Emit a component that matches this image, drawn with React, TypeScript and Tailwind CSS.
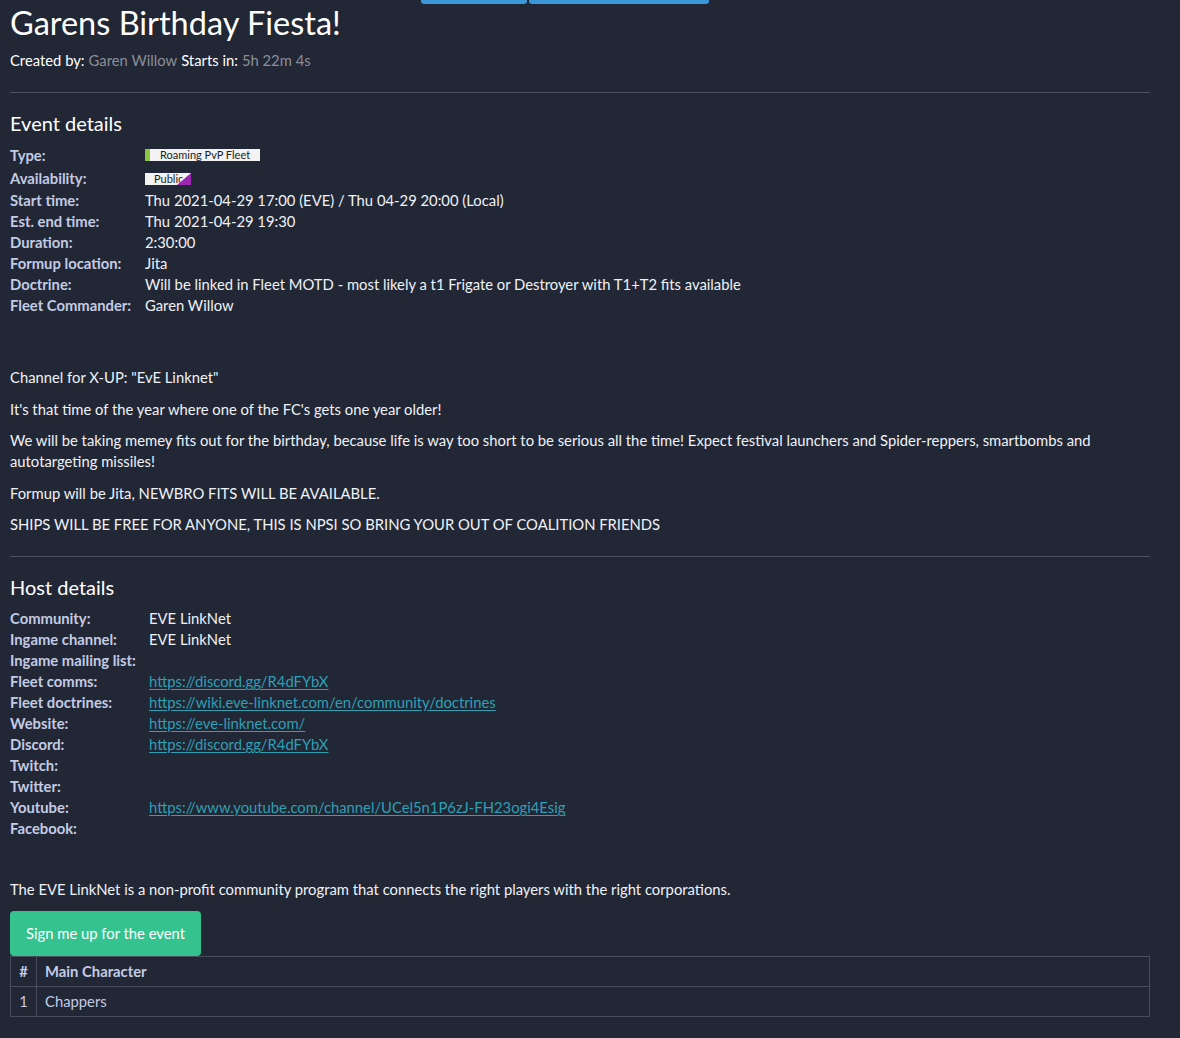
import React from "react";

const font = { fontFamily: "Lato, 'Noto Sans', sans-serif" };

function Row({ label, children, labelW }: { label: string; children?: React.ReactNode; labelW: string }) {
  return (
    <div className="flex h-[21px] items-center">
      <div className={`${labelW} shrink-0 font-bold text-[#c3cbe4]`}>{label}</div>
      <div className="text-[#eff2f7]">{children}</div>
    </div>
  );
}

function Link({ children }: { children: React.ReactNode }) {
  return <a className="text-[#2f9fb3] underline underline-offset-2" href="#">{children}</a>;
}

export default function App() {
  return (
    <div className="relative min-h-[1038px] bg-[#222736] text-[14.8px] leading-[21px] text-[#eff2f7]" style={font}>
      <div className="absolute left-[421px] top-0 flex h-[4px] gap-[2px]">
        <div className="h-[4px] w-[106px] rounded-b-[3px] bg-[#3b97d8]" />
        <div className="h-[4px] w-[180px] rounded-b-[3px] bg-[#3b97d8]" />
      </div>
      <div className="w-[1140px] pl-[10px] pr-[30px] box-content">
        <h1 className="pt-[3px] text-[32.5px] leading-[40px] text-white">Garens Birthday Fiesta!</h1>
        <div className="mt-[7px] flex h-[21px] items-center gap-[4px]">
          <span className="text-white">Created by:</span>
          <span className="text-[#8a8f99]">Garen Willow</span>
          <span className="text-white">Starts in:</span>
          <span className="text-[#8a8f99]">5h 22m 4s</span>
        </div>
        <hr className="mt-[21px] w-[1140px] border-t border-[#4a4f5b]" />
        <h2 className="mt-[18px] text-[20px] leading-[24px] text-white">Event details</h2>
        <div className="mt-[8px]">
          <div className="flex h-[24px] items-center">
            <div className="w-[135px] shrink-0 font-bold text-[#c3cbe4]">Type:</div>
            <span className="flex h-[12px] items-center bg-[#f3f3f3] text-[11px] leading-[12px] text-[#222]">
              <span className="h-[12px] w-[5px] bg-[#8cc63f]" />
              <span className="px-[10px]">Roaming PvP Fleet</span>
            </span>
          </div>
          <div className="flex h-[23px] items-center">
            <div className="w-[135px] shrink-0 font-bold text-[#c3cbe4]">Availability:</div>
            <span className="relative flex h-[12px] w-[46px] items-center bg-[#f3f3f3] pl-[9px] text-[11px] leading-[12px] text-[#222]">
              Public
              <span className="absolute right-0 top-0 h-0 w-0 border-b-[12px] border-l-[14px] border-b-[#9c27b0] border-l-transparent" />
            </span>
          </div>
          <Row label="Start time:" labelW="w-[135px]">Thu 2021-04-29 17:00 (EVE) / Thu 04-29 20:00 (Local)</Row>
          <Row label="Est. end time:" labelW="w-[135px]">Thu 2021-04-29 19:30</Row>
          <Row label="Duration:" labelW="w-[135px]">2:30:00</Row>
          <Row label="Formup location:" labelW="w-[135px]">Jita</Row>
          <Row label="Doctrine:" labelW="w-[135px]">Will be linked in Fleet MOTD - most likely a t1 Frigate or Destroyer with T1+T2 fits available</Row>
          <Row label="Fleet Commander:" labelW="w-[135px]">Garen Willow</Row>
        </div>
        <div className="mt-[51px] flex flex-col gap-[10.5px]">
          <p>Channel for X-UP: "EvE Linknet"</p>
          <p>It's that time of the year where one of the FC's gets one year older!</p>
          <p>
            We will be taking memey fits out for the birthday, because life is way too short to be serious all the time! Expect festival launchers and Spider-reppers, smartbombs and autotargeting missiles!
          </p>
          <p>Formup will be Jita, NEWBRO FITS WILL BE AVAILABLE.</p>
          <p>SHIPS WILL BE FREE FOR ANYONE, THIS IS NPSI SO BRING YOUR OUT OF COALITION FRIENDS</p>
        </div>
        <hr className="mt-[21px] w-[1140px] border-t border-[#4a4f5b]" />
        <h2 className="mt-[18px] text-[20px] leading-[24px] text-white">Host details</h2>
        <div className="mt-[9px]">
          <Row label="Community:" labelW="w-[139px]">EVE LinkNet</Row>
          <Row label="Ingame channel:" labelW="w-[139px]">EVE LinkNet</Row>
          <Row label="Ingame mailing list:" labelW="w-[139px]" />
          <Row label="Fleet comms:" labelW="w-[139px]"><Link>https://discord.gg/R4dFYbX</Link></Row>
          <Row label="Fleet doctrines:" labelW="w-[139px]"><Link>https://wiki.eve-linknet.com/en/community/doctrines</Link></Row>
          <Row label="Website:" labelW="w-[139px]"><Link>https://eve-linknet.com/</Link></Row>
          <Row label="Discord:" labelW="w-[139px]"><Link>https://discord.gg/R4dFYbX</Link></Row>
          <Row label="Twitch:" labelW="w-[139px]" />
          <Row label="Twitter:" labelW="w-[139px]" />
          <Row label="Youtube:" labelW="w-[139px]"><Link>https://www.youtube.com/channel/UCel5n1P6zJ-FH23ogi4Esig</Link></Row>
          <Row label="Facebook:" labelW="w-[139px]" />
        </div>
        <p className="mt-[40px]">The EVE LinkNet is a non-profit community program that connects the right players with the right corporations.</p>
        <button className="mt-[11px] h-[45px] w-[191px] rounded-[4px] bg-[#34c38f] text-[14.8px] text-white" style={font}>
          Sign me up for the event
        </button>
        <table className="w-[1140px] border-collapse text-[#c3cbe4]">
          <thead>
            <tr className="h-[30px]">
              <th className="w-[26px] border border-[#474d5c] text-center font-bold">#</th>
              <th className="border border-[#474d5c] pl-[8px] text-left font-bold">Main Character</th>
            </tr>
          </thead>
          <tbody>
            <tr className="h-[30px]">
              <td className="border border-[#474d5c] text-center">1</td>
              <td className="border border-[#474d5c] pl-[8px]">Chappers</td>
            </tr>
          </tbody>
        </table>
      </div>
    </div>
  );
}
